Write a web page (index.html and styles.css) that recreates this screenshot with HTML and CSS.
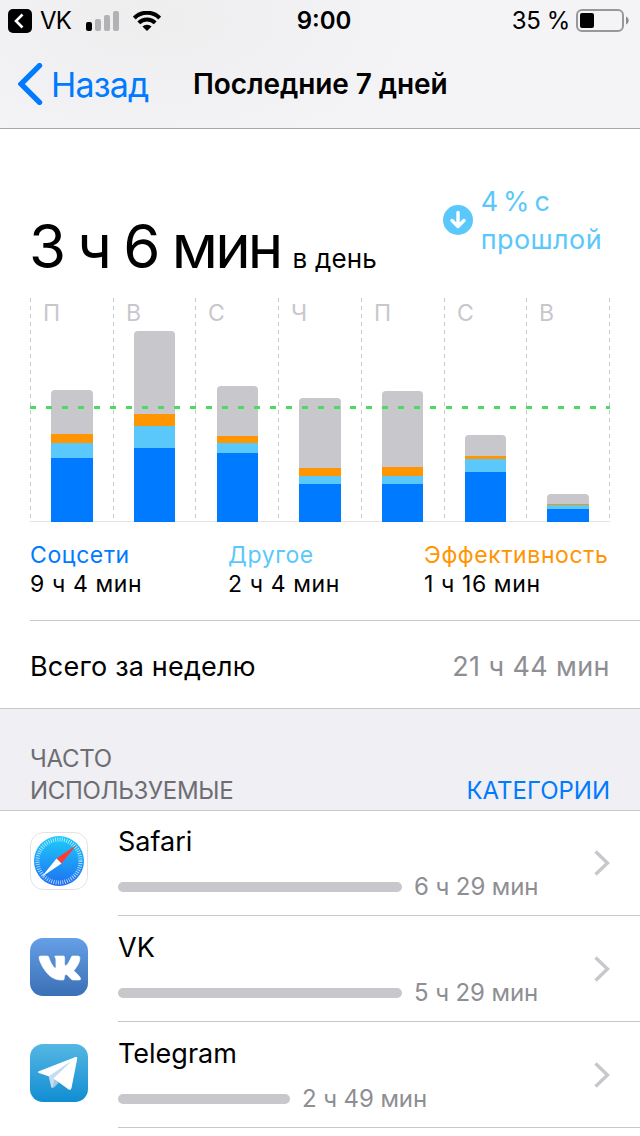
FILE: index.html
```html
<!DOCTYPE html>
<html lang="ru">
<head>
    <meta charset="UTF-8">
    <meta name="viewport" content="width=device-width, initial-scale=1.0">
    <title>Последние 7 дней</title>
    <link rel="stylesheet" href="styles.css">
</head>
<body>
    <header class="header">
        <div class="status">
            <div class="status-left">
                <svg class="return-icon" width="24" height="24" viewBox="0 0 24 24">
                    <rect width="24" height="24" rx="5"/>
                    <path d="M14.500 5.500L8 12l6.500 6.500" fill="none" stroke="#fff" stroke-width="2.600"/>
                </svg>
                <span class="carrier">VK</span>
                <svg class="signal" width="34" height="20" viewBox="0 0 34 20">
                    <rect x="0" y="11" width="6" height="9" rx="2"/>
                    <rect x="9" y="8" width="6" height="12" rx="2" fill="#b2b2b4"/>
                    <rect x="18" y="4" width="6" height="16" rx="2" fill="#b2b2b4"/>
                    <rect x="27" y="0" width="6" height="20" rx="2" fill="#b2b2b4"/>
                </svg>
                <svg class="wifi" width="28" height="20" viewBox="0 0 28 20">
                    <path d="M1.300 7a18 18 0 0 1 25.400 0M5.800 11.900a11.600 11.600 0 0 1 16.400 0" fill="none" stroke="#000" stroke-width="4.100"/>
                    <path d="M14 20l-4.600-4.400a6.600 6.600 0 0 1 9.200 0z"/>
                </svg>
            </div>
            <div class="clock">9:00</div>
            <div class="status-right">
                <span class="percent">35 %</span>
                <svg class="battery" width="54" height="24" viewBox="0 0 54 24">
                    <rect x="1" y="1" width="46" height="21" rx="5" fill="none" stroke="#98989a" stroke-width="2"/>
                    <rect x="4" y="4" width="14" height="15" rx="2"/>
                    <path d="M50 7.500c3.600 1.500 3.600 6.500 0 8z" fill="#8c8c8e"/>
                </svg>
            </div>
        </div>
        <nav class="nav">
            <a class="back" href="#">
                <svg width="26" height="42" viewBox="0 0 26 42">
                    <path d="M21.500 2.600L3 21l18.500 18.400" fill="none" stroke="#007aff" stroke-width="5.400" stroke-linecap="round"/>
                </svg>
                <span>Назад</span>
            </a>
            <h1 class="title">Последние 7 дней</h1>
        </nav>
    </header>

    <main>
        <section class="summary">
            <p class="average"><span class="average-value">3 ч 6 мин</span><span class="average-unit">в день</span></p>
            <div class="trend">
                <svg width="30" height="30" viewBox="0 0 30 30">
                    <circle cx="15" cy="15" r="15" fill="#5ac8fa"/>
                    <path d="M15 7.500v14M9 15.500l6 6 6-6" fill="none" stroke="#fff" stroke-width="3.400" stroke-linecap="round" stroke-linejoin="round"/>
                </svg>
                <span>4 % с<br>прошлой</span>
            </div>
        </section>

        <section class="chart">
            <div class="day"><span class="day-name">П</span><div class="bar wide"><i class="rest" style="height:44px"></i><i class="work" style="height:9px"></i><i class="other" style="height:15px"></i><i class="social" style="height:64px"></i></div></div>
            <div class="day"><span class="day-name">В</span><div class="bar"><i class="rest" style="height:83px"></i><i class="work" style="height:12px"></i><i class="other" style="height:22px"></i><i class="social" style="height:74px"></i></div></div>
            <div class="day"><span class="day-name">С</span><div class="bar shifted"><i class="rest" style="height:50px"></i><i class="work" style="height:7px"></i><i class="other" style="height:10px"></i><i class="social" style="height:69px"></i></div></div>
            <div class="day"><span class="day-name">Ч</span><div class="bar wide"><i class="rest" style="height:70px"></i><i class="work" style="height:8px"></i><i class="other" style="height:8px"></i><i class="social" style="height:38px"></i></div></div>
            <div class="day"><span class="day-name">П</span><div class="bar"><i class="rest" style="height:76px"></i><i class="work" style="height:9px"></i><i class="other" style="height:8px"></i><i class="social" style="height:38px"></i></div></div>
            <div class="day"><span class="day-name">С</span><div class="bar"><i class="rest" style="height:21px"></i><i class="work" style="height:3px"></i><i class="other" style="height:13px"></i><i class="social" style="height:50px"></i></div></div>
            <div class="day"><span class="day-name">В</span><div class="bar wide"><i class="rest" style="height:10px"></i><i class="work" style="height:1px"></i><i class="other" style="height:4px"></i><i class="social" style="height:13px"></i></div></div>
            <div class="mean-line"></div>
        </section>

        <section class="legend">
            <div class="legend-item"><span class="text-social">Соцсети</span><span>9 ч 4 мин</span></div>
            <div class="legend-item"><span class="text-other">Другое</span><span>2 ч 4 мин</span></div>
            <div class="legend-item"><span class="text-work">Эффективность</span><span>1 ч 16 мин</span></div>
        </section>

        <section class="total">
            <span class="total-name">Всего за неделю</span>
            <span class="total-value">21 ч 44 мин</span>
        </section>

        <div class="list-header">
            <h2>ЧАСТО<br>ИСПОЛЬЗУЕМЫЕ</h2>
            <a href="#">КАТЕГОРИИ</a>
        </div>

        <ul class="apps">
            <li class="app">
                <svg class="app-icon" width="58" height="58" viewBox="0 0 58 58">
                    <defs>
                        <linearGradient id="safari" x1="0" y1="0" x2="0" y2="1">
                            <stop offset="0" stop-color="#1ccdfb"/>
                            <stop offset="1" stop-color="#1f6ef1"/>
                        </linearGradient>
                    </defs>
                    <rect x=".5" y=".5" width="57" height="57" rx="13" fill="#fff" stroke="#e3e3e5"/>
                    <circle cx="29" cy="29" r="25" fill="url(#safari)"/>
                    <circle cx="29" cy="29" r="21.500" fill="none" stroke="#fff" stroke-opacity=".75" stroke-width="4" stroke-dasharray=".8 1.452"/>
                    <path d="M46.500 13L26.500 26.500l5 5z" fill="#ff3b30"/>
                    <path d="M11.500 45L26.500 26.500l5 5z" fill="#fff"/>
                </svg>
                <div class="app-body">
                    <div class="app-info">
                        <span class="app-name">Safari</span>
                        <div class="usage"><i class="usage-bar" style="width:284px"></i><span>6 ч 29 мин</span></div>
                    </div>
                    <svg class="chevron" width="16" height="26" viewBox="0 0 16 26"><path d="M1.500 1.500L13.500 13l-12 11.500" fill="none" stroke="#c7c7cc" stroke-width="3.400"/></svg>
                </div>
            </li>
            <li class="app">
                <svg class="app-icon" width="58" height="58" viewBox="0 0 58 58">
                    <defs>
                        <linearGradient id="vk" x1="0" y1="0" x2="0" y2="1">
                            <stop offset="0" stop-color="#659fe6"/>
                            <stop offset="1" stop-color="#3a70b5"/>
                        </linearGradient>
                    </defs>
                    <rect width="58" height="58" rx="13" fill="url(#vk)"/>
                    <path d="M30.600 42h2.300s.7-.1 1.100-.5c.3-.4.3-1.100.3-1.100s0-3.300 1.500-3.800 3.400 3.200 5.500 4.600c1.500 1.100 2.700.8 2.700.8h5c2.300 0 1.500-1.800 1.500-1.800-.6-1.500-3.100-4.100-5.300-6.100-1.700-1.600-1.500-1.300.6-4.100 2.200-3 4-6.300 4.100-9.800.1-.8-.4-2-1.600-2.200h-5.600s-.5 0-.8.200-.6.700-.6.700-.9 2.500-2.100 4.500c-2.500 4.200-3.500 4.400-3.900 4.200-.9-.6-.7-2.500-.7-3.900v-3.700c0-1.800-.5-2-1.500-2h-7.400s-1 .1-1 .6c0 .6 1.200 1.200 1.200 3.200v6.700c0 1.100.1 1.500-.6 1.500-1.300 0-4.400-4.600-6.200-9.800-.4-1.500-.7-2.200-2.200-2.200h-5.600C9.100 18 9 18.800 9 19.500c0 1.300 1.700 7.800 7.800 15.300C20.900 39.800 26 42 30.600 42z" fill="#fff" stroke="#fff" stroke-width=".6"/>
                </svg>
                <div class="app-body">
                    <div class="app-info">
                        <span class="app-name">VK</span>
                        <div class="usage"><i class="usage-bar" style="width:284px"></i><span>5 ч 29 мин</span></div>
                    </div>
                    <svg class="chevron" width="16" height="26" viewBox="0 0 16 26"><path d="M1.500 1.500L13.500 13l-12 11.500" fill="none" stroke="#c7c7cc" stroke-width="3.400"/></svg>
                </div>
            </li>
            <li class="app">
                <svg class="app-icon" width="58" height="58" viewBox="0 0 58 58">
                    <defs>
                        <linearGradient id="telegram" x1="0" y1="0" x2="0" y2="1">
                            <stop offset="0" stop-color="#55b7e3"/>
                            <stop offset="1" stop-color="#118dd2"/>
                        </linearGradient>
                    </defs>
                    <rect width="58" height="58" rx="13" fill="url(#telegram)"/>
                    <path d="M18.500 31.500L41 18 26 36l-3.400 8c-.9 0-1.300-.8-1.600-1.800z" fill="#c5dcf2"/>
                    <path d="M22.600 44c1 0 1.600-.6 2.400-1.400l3.600-3.800L25 34z" fill="#a5c6e5"/>
                    <path d="M8.800 27.300L45.500 13c1.200-.4 2 .2 1.700 1.700L41.500 44c-.4 1.800-1.400 2.200-2.800 1.400L23.500 34.500 40.500 18 18.600 32.200l-9.700-3.200c-1.400-.4-1.300-1.200-.1-1.700z" fill="#fff"/>
                </svg>
                <div class="app-body">
                    <div class="app-info">
                        <span class="app-name">Telegram</span>
                        <div class="usage"><i class="usage-bar" style="width:172px"></i><span>2 ч 49 мин</span></div>
                    </div>
                    <svg class="chevron" width="16" height="26" viewBox="0 0 16 26"><path d="M1.500 1.500L13.500 13l-12 11.500" fill="none" stroke="#c7c7cc" stroke-width="3.400"/></svg>
                </div>
            </li>
        </ul>
    </main>
</body>
</html>
```

FILE: styles.css
```css
* {
    box-sizing: border-box;
}
body {
    margin: 0;
    width: 640px;
    height: 1136px;
    overflow: hidden;
    background: #fff;
    color: #000;
    font-family: Inter, "Noto Sans", sans-serif;
    font-size: 24px;
}
a {
    text-decoration: none;
    color: #007aff;
}
h1, h2, p, ul {
    margin: 0;
    padding: 0;
    font-weight: 400;
}
svg {
    display: block;
    flex: none;
}

/* status bar and navigation */
.header {
    height: 129px;
    border-bottom: 1px solid #a7a7ac;
    background: radial-gradient(ellipse 300px 150px at 150px 20px, #eeeeef, #f4f4f7);
}
.status {
    display: grid;
    grid-template-columns: 1fr auto 1fr;
    align-items: center;
    height: 40px;
    padding: 1px 10px 0 8px;
}
.status-left, .status-right {
    display: flex;
    align-items: center;
}
.status-right {
    justify-content: flex-end;
}
.carrier {
    margin-left: 8px;
    width: 46px;
    letter-spacing: -0.8px;
}
.wifi {
    margin-left: 13px;
}
.clock {
    padding-left: 10px;
    font-weight: 600;
}
.percent {
    letter-spacing: -0.4px;
}
.battery {
    margin-left: 6px;
}
.nav {
    display: grid;
    grid-template-columns: 193px auto;
    align-items: center;
    height: 88px;
}
.back {
    display: flex;
    align-items: center;
    padding-left: 18px;
    font-size: 34px;
}
.back span {
    margin-left: 7px;
    letter-spacing: -0.8px;
}
.title {
    font-size: 28px;
    font-weight: 600;
    letter-spacing: -0.1px;
}

/* daily average */
.summary {
    display: flex;
    justify-content: space-between;
    height: 169px;
    padding: 53px 38px 0 30px;
}
.average {
    display: flex;
    align-items: baseline;
    padding-top: 28px;
    line-height: 72px;
}
.average-value {
    font-size: 60px;
    letter-spacing: -2.8px;
    margin-left: -1px;
}
.average-unit {
    margin-left: 12px;
    font-size: 26px;
    letter-spacing: 0.2px;
}
.trend {
    display: flex;
    align-items: center;
    gap: 8px;
    height: 76px;
    color: #5ac8fa;
    font-size: 27px;
    line-height: 38px;
    letter-spacing: 0.4px;
    word-spacing: -3.5px;
}
.trend span {
    margin-top: 2px;
}

/* weekly chart */
.chart {
    position: relative;
    display: grid;
    grid-template-columns: 83px 82px 83px 83px 83px 82px 84px;
    width: 580px;
    height: 224px;
    margin-left: 30px;
    background: linear-gradient(#e5e5e7, #e5e5e7) left bottom / 100% 1px no-repeat;
}
.day {
    display: flex;
    flex-direction: column;
    justify-content: space-between;
    background: repeating-linear-gradient(#c7c7cc 0 4px, transparent 4px 8px) left top / 1px 220px no-repeat;
}
/* last day closes the grid on the right */
.day:nth-last-child(2) {
    background: repeating-linear-gradient(#c7c7cc 0 4px, transparent 4px 8px) left top / 1px 220px no-repeat,
        repeating-linear-gradient(#c7c7cc 0 4px, transparent 4px 8px) right top / 1px 220px no-repeat;
}
.day-name {
    padding-left: 13px;
    color: #c7c7cc;
    font-size: 23px;
    line-height: 30px;
}
.bar {
    width: 41px;
    margin-left: 21px;
    border-radius: 4px 4px 0 0;
    overflow: hidden;
}
.bar.wide {
    width: 42px;
}
.bar.shifted {
    margin-left: 22px;
}
.bar i {
    display: block;
}
.rest {
    background: #c7c7cc;
}
.work {
    background: #ff9500;
}
.other {
    background: #5ac8fa;
}
.social {
    background: #007aff;
}
.mean-line {
    position: absolute;
    left: 0;
    right: 0;
    top: 108px;
    height: 3px;
    background: repeating-linear-gradient(90deg, #4cd964 0 6px, transparent 6px 16px);
}

/* category totals */
.legend {
    display: grid;
    grid-template-columns: 198px 196px auto;
    height: 99px;
    margin-left: 30px;
    padding-top: 19px;
    border-bottom: 1px solid #c8c7cc;
    line-height: 29px;
    font-size: 23px;
    letter-spacing: 0.6px;
}
.legend-item span {
    display: block;
}
.text-social {
    color: #007aff;
}
.text-other {
    color: #5ac8fa;
}
.text-work {
    color: #ff9500;
}
.total {
    display: flex;
    justify-content: space-between;
    height: 87px;
    padding: 0 30px;
    font-size: 27px;
    line-height: 92px;
    letter-spacing: 0.2px;
}
.total-value {
    color: #8e8e93;
    letter-spacing: 0.4px;
}

/* app list */
.list-header {
    display: flex;
    justify-content: space-between;
    align-items: flex-end;
    height: 103px;
    padding: 0 30px 3px;
    border-top: 1px solid #c8c7cc;
    border-bottom: 1px solid #c8c7cc;
    background: #efeff4;
    line-height: 32px;
}
.list-header h2 {
    color: #6d6d72;
    font-size: 24px;
    letter-spacing: -0.3px;
}
.apps {
    margin-top: -1px;
    list-style: none;
}
.app {
    display: flex;
    height: 106px;
    padding-left: 30px;
}
.app-icon {
    margin: 22px 30px 0 0;
}
.app-body {
    display: flex;
    justify-content: space-between;
    align-items: center;
    flex: 1;
    padding-right: 30px;
    border-bottom: 1px solid #c8c7cc;
}
.app-info {
    margin-top: 1px;
}
.app-name {
    display: block;
    height: 47px;
    font-size: 27px;
    line-height: 34px;
}
.usage {
    display: flex;
    align-items: center;
    height: 30px;
    color: #8e8e93;
    letter-spacing: -0.1px;
}
.usage-bar {
    height: 10px;
    margin-right: 12px;
    border-radius: 5px;
    background: #c7c7cc;
}
```
